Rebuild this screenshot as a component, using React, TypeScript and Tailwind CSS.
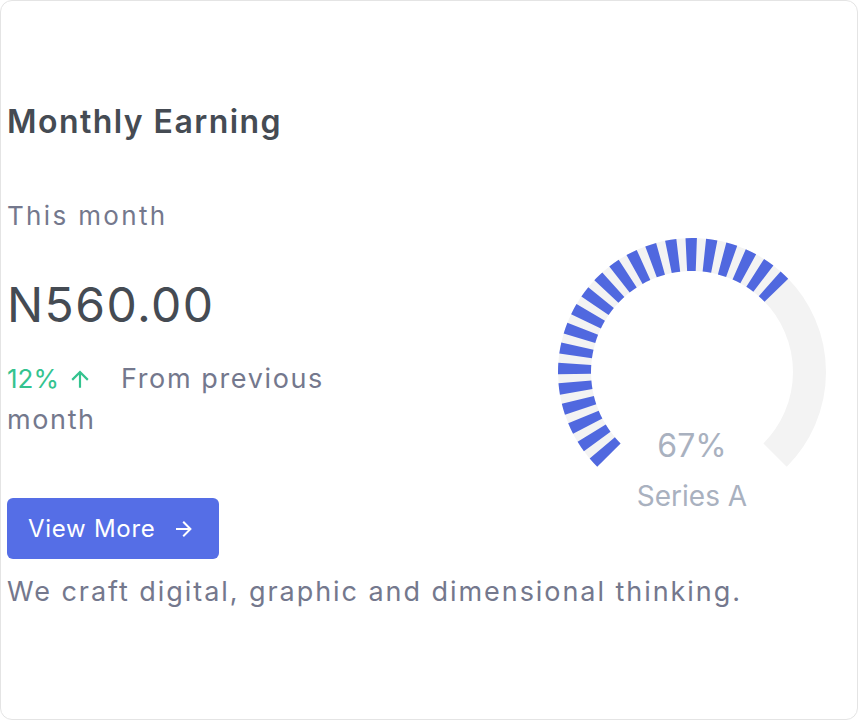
import React from 'react';

// gauge geometry (svg coords, 300x300 box)
const CX = 150;
const CY = 150;
const R = 117.5;

function point(deg: number) {
    const rad = (deg * Math.PI) / 180;
    return [CX + R * Math.sin(rad), CY - R * Math.cos(rad)];
}

function arcPath(from: number, to: number) {
    const [x1, y1] = point(from);
    const [x2, y2] = point(to);
    const large = to - from > 180 ? 1 : 0;
    return `M ${x1} ${y1} A ${R} ${R} 0 ${large} 1 ${x2} ${y2}`;
}

function RadialGauge({ value, label }: { value: number; label: string }) {
    const end = -135 + (270 * value) / 100;
    return (
        <svg width={300} height={300} viewBox="0 0 300 300">
            <path d={arcPath(-135, 135)} fill="none" stroke="#f3f3f3" strokeWidth={33} />
            <path
                d={arcPath(-135, end)}
                fill="none"
                stroke="#5068df"
                strokeWidth={33}
                strokeDasharray="10 8.06"
            />
            <text x={CX} y={235} textAnchor="middle" fontSize={32} fill="#a9b1bf">
                {value}%
            </text>
            <text x={CX} y={283.5} textAnchor="middle" fontSize={28} fill="#a9b1bf">
                {label}
            </text>
        </svg>
    );
}

function ArrowUpIcon() {
    return (
        <svg width={26} height={26} viewBox="0 0 24 24" fill="currentColor">
            <path d="M13,20H11V8L5.5,13.5L4.08,12.08L12,4.16L19.92,12.08L18.5,13.5L13,8V20Z" />
        </svg>
    );
}

function ArrowRightIcon() {
    return (
        <svg width={24} height={24} viewBox="0 0 24 24" fill="currentColor">
            <path d="M4,11V13H16L10.5,18.5L11.92,19.92L19.84,12L11.92,4.08L10.5,5.5L16,11H4Z" />
        </svg>
    );
}

export default function App() {
    return (
        <div className="w-[858px] h-[720px] bg-white">
            <div className="h-full rounded-[12px] border border-[#e4e4e4] pl-[6px] pt-[103px] font-['Inter',sans-serif]">
                <h4 className="text-[32px] leading-[36px] font-semibold text-[#454b53] tracking-[0.045em]">
                    Monthly Earning
                </h4>

                <div className="flex mt-[58px]">
                    <div className="w-[340px]">
                        <p className="text-[26px] leading-[36px] text-[#74788d] tracking-[0.09em]">This month</p>
                        <h3 className="mt-[43px] text-[48px] leading-[56px] text-[#454b53] tracking-[0.03em]">
                            N560.00
                        </h3>
                        <p className="mt-[25px] text-[27px] leading-[41px] text-[#74788d] tracking-[0.06em]">
                            <span className="inline-flex items-center text-[#34c38f] mr-[28px] align-top tracking-normal text-[26px]">
                                12%<span className="ml-[8px]"><ArrowUpIcon /></span>
                            </span>
                            From previous month
                        </p>
                        <button className="mt-[58px] flex items-center w-[212px] h-[61px] pl-[21px] rounded-[6px] bg-[#556ee6] text-white text-[24px] tracking-[0.03em]">
                            View More
                            <span className="ml-[16px]"><ArrowRightIcon /></span>
                        </button>
                    </div>

                    <div className="ml-auto mr-[15px] mt-[23.5px]">
                        <RadialGauge value={67} label="Series A" />
                    </div>
                </div>

                <p className="mt-[15px] text-[27px] leading-[36px] text-[#74788d] tracking-[0.072em]">
                    We craft digital, graphic and dimensional thinking.
                </p>
            </div>
        </div>
    );
}
